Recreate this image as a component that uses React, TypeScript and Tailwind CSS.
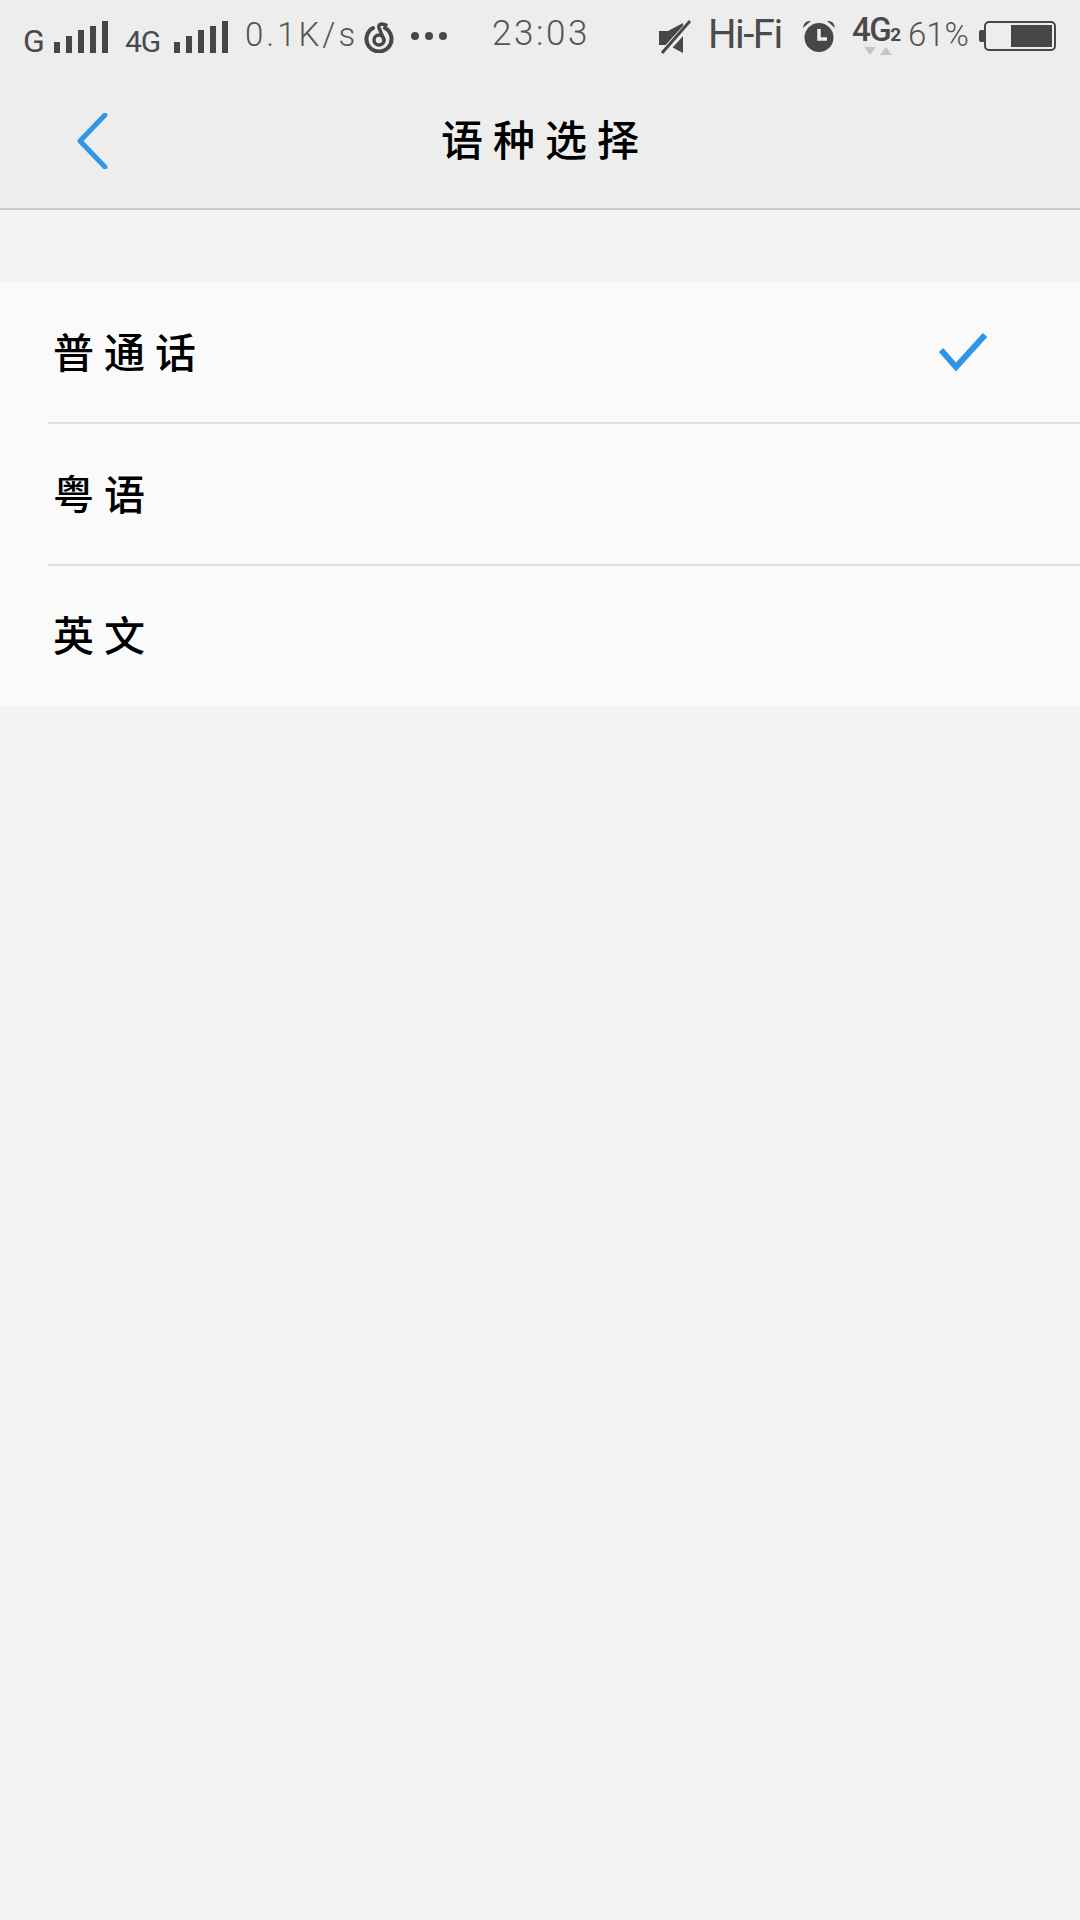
const cjk = "font-['Noto_Sans_CJK_SC',sans-serif]";

function Bars() {
  const heights = [11, 17, 23, 27, 32];
  return (
    <div className="mt-[21px] flex items-end gap-[6px] h-[32px]">
      {heights.map((h, i) => (
        <div key={i} className="w-[6px] bg-[#474747]" style={{ height: h }} />
      ))}
    </div>
  );
}

function StatusBar() {
  return (
    <div className="flex items-start h-[54px] text-[#4a4a4a] font-['Roboto',sans-serif]">
      <span className="ml-[23px] mt-[26px] w-[21px] text-[32px] leading-[30px]">G</span>
      <div className="ml-[10px]"><Bars /></div>
      <span className="ml-[17px] mt-[27px] w-[38px] text-[30px] leading-[30px] tracking-[-1px] whitespace-nowrap">4G</span>
      <div className="ml-[11px]"><Bars /></div>
      <span className="ml-[17px] mt-[17px] w-[110px] text-[33px] leading-[36px] font-light tracking-[3px] whitespace-nowrap text-[#555]">0.1K/s</span>
      <svg className="ml-[9px] mt-[22px]" width="30" height="31" viewBox="0 0 30 31" fill="none">
        <path d="M9 6 A12.5 12.5 0 1 0 21 6" stroke="#474747" strokeWidth="4" strokeLinecap="round" />
        <circle cx="15" cy="18" r="5" stroke="#474747" strokeWidth="3.5" />
        <path d="M20 18 L15 6 Q14 2 18 2 L22 3" stroke="#474747" strokeWidth="3.5" strokeLinecap="round" />
      </svg>
      <div className="ml-[17px] mt-[32px] flex gap-[6px]">
        <div className="w-[8px] h-[8px] rounded-full bg-[#474747]" />
        <div className="w-[8px] h-[8px] rounded-full bg-[#474747]" />
        <div className="w-[8px] h-[8px] rounded-full bg-[#474747]" />
      </div>
      <span className="ml-[45px] mt-[15px] w-[96px] text-[35px] leading-[38px] font-light tracking-[2.6px] whitespace-nowrap text-[#555]">23:03</span>
      <svg className="ml-[71px] mt-[20px]" width="33" height="34" viewBox="0 0 33 34" fill="none">
        <path d="M0 11 H9 L24 3 V33 L9 25 H0 Z" fill="#474747" />
        <path d="M3 34 L34 0" stroke="#ededed" strokeWidth="7" />
        <path d="M3 33 L31 1" stroke="#474747" strokeWidth="3" />
      </svg>
      <span className="ml-[16px] mt-[15px] w-[73px] text-[40px] leading-[40px] tracking-[-1.5px] whitespace-nowrap">Hi-Fi</span>
      <svg className="ml-[21px] mt-[19px]" width="34" height="34" viewBox="0 0 34 34" fill="none">
        <circle cx="17" cy="18.5" r="14.5" fill="#474747" />
        <path d="M17 10 V20 H25" stroke="#ededed" strokeWidth="3.5" />
        <path d="M1 9 Q2 1 9 2 Z M33 9 Q32 1 25 2 Z" fill="#474747" />
      </svg>
      <div className="relative ml-[16px] mt-[15px] w-[48px] h-[40px]">
        <span className="block text-[33px] leading-[30px] font-medium tracking-[-1.5px] whitespace-nowrap">4G<span className="text-[19px] font-bold tracking-normal">2</span></span>
        <div className="absolute left-[12px] top-[32px] flex gap-[4px]">
          <div className="w-0 h-0 border-x-[6px] border-x-transparent border-t-[8px] border-t-[#c4c4c4]" />
          <div className="w-0 h-0 border-x-[6px] border-x-transparent border-b-[8px] border-b-[#c4c4c4]" />
        </div>
      </div>
      <span className="ml-[8px] mt-[17px] w-[62px] text-[33px] leading-[36px] font-light text-[#555] whitespace-nowrap">61%</span>
      <div className="ml-[9px] mt-[30px] w-[5px] h-[12px] rounded-l-[2px] bg-[#474747]" />
      <div className="mt-[21px] w-[72px] h-[30px] rounded-[5px] border-2 border-[#474747] flex justify-end items-center pr-[2px]">
        <div className="w-[41px] h-[22px] bg-[#474747]" />
      </div>
    </div>
  );
}

function Row({ label, checked, last }: { label: string; checked?: boolean; last?: boolean }) {
  return (
    <div className={`relative flex items-center justify-between bg-[#fafafa] ${last ? "h-[140px]" : "h-[142px]"}`}>
      <span className={`${cjk} ml-[53px] pb-[7px] text-[41px] leading-[50px] font-medium tracking-[10px] text-black`}>{label}</span>
      {checked && (
        <svg className="mr-[93px] mb-[2px]" width="48" height="40" viewBox="0 0 48 40" fill="none">
          <path d="M2 18 L17 35 L46 3" stroke="#2f96e8" strokeWidth="6" />
        </svg>
      )}
      {!last && <div className="absolute left-[48px] right-0 bottom-0 h-[2px] bg-[#e1e1e1]" />}
    </div>
  );
}

export default function App() {
  return (
    <div className="w-[1080px] h-[1920px] bg-[#f4f4f4] overflow-hidden">
      <div className="h-[210px] bg-[#ededed] border-b-2 border-[#cbcbcb]">
        <StatusBar />
        <div className="grid grid-cols-[1fr_auto_1fr] items-center h-[154px] pt-[14px]">
          <svg className="ml-[77px] mt-[6px]" width="32" height="56" viewBox="0 0 32 56" fill="none">
            <path d="M28 2 L3 28 L28 54" stroke="#2f96e8" strokeWidth="5" strokeLinecap="round" strokeLinejoin="round" />
          </svg>
          <span className={`${cjk} pl-[10px] text-[42px] leading-[50px] font-medium tracking-[10px] text-black whitespace-nowrap`}>语种选择</span>
          <div />
        </div>
      </div>
      <div className="mt-[72px]">
        <Row label="普通话" checked />
        <Row label="粤语" />
        <Row label="英文" last />
      </div>
    </div>
  );
}
